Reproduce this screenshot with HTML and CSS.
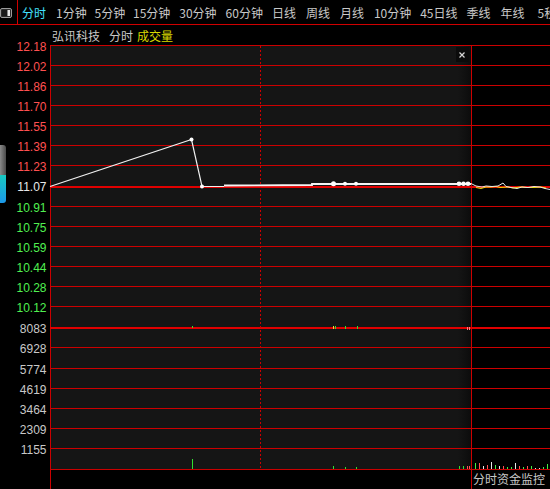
FILE: index.html
```html
<!DOCTYPE html>
<html lang="zh">
<head>
<meta charset="utf-8">
<title>弘讯科技 分时</title>
<link rel="stylesheet" href="styles.css">
</head>
<body>
<div class="app">
  <div class="topbar">
    <div class="menu-btn">
      <svg width="13" height="11" viewBox="0 0 13 11">
        <rect x="0.5" y="0.5" width="11" height="9" rx="1.5" fill="#2a2a2a" stroke="#9a9a9a"/>
        <rect x="2" y="2" width="5" height="6" fill="#1a1a1a"/>
        <rect x="7.5" y="2" width="2.5" height="6" fill="#e8e8e8"/>
      </svg>
    </div>
    <div class="tabs">
      <span class="tab w2 active">分时</span>
      <span class="tab w3">1分钟</span>
      <span class="tab w3">5分钟</span>
      <span class="tab w4">15分钟</span>
      <span class="tab w4">30分钟</span>
      <span class="tab w4">60分钟</span>
      <span class="tab w2">日线</span>
      <span class="tab w2">周线</span>
      <span class="tab w2">月线</span>
      <span class="tab w4">10分钟</span>
      <span class="tab w4">45日线</span>
      <span class="tab w2">季线</span>
      <span class="tab w2b">年线</span>
      <span class="tab w2">5秒</span>
    </div>
  </div>
  <div class="title">
    <span class="name">弘讯科技</span>
    <span class="period">分时</span>
    <span class="vol">成交量</span>
  </div>
  <svg class="chart" width="550" height="444" viewBox="0 45 550 444">
    <defs>
      <linearGradient id="thumbTop" x1="0" x2="1" y1="0" y2="0">
        <stop offset="0" stop-color="#8a8a8a"/>
        <stop offset="1" stop-color="#4a4a4a"/>
      </linearGradient>
      <linearGradient id="thumbBot" x1="0" x2="0" y1="0" y2="1">
        <stop offset="0" stop-color="#18c8c0"/>
        <stop offset="1" stop-color="#1c98e8"/>
      </linearGradient>
      <linearGradient id="edge" x1="0" x2="1" y1="0" y2="0">
        <stop offset="0" stop-color="#151515"/>
        <stop offset="1" stop-color="#0c0c0c"/>
      </linearGradient>
      <clipPath id="thumbClip"><rect x="-3" y="145" width="9" height="58" rx="3"/></clipPath>
    </defs>

    <!-- scroll thumb -->
    <g clip-path="url(#thumbClip)">
      <rect x="0" y="145" width="6" height="30" fill="url(#thumbTop)"/>
      <rect x="0" y="175" width="6" height="28" fill="url(#thumbBot)"/>
    </g>

    <!-- plot background -->
    <rect x="51" y="46" width="420" height="423" fill="#151515"/>
    <rect x="458" y="46" width="13" height="423" fill="url(#edge)"/>

    <!-- close button -->
    <rect x="456" y="47" width="13" height="15" fill="#0b0b0b"/>
    <path d="M459.5 52.5 L464.5 57.5 M464.5 52.5 L459.5 57.5" stroke="#d8d8d8" stroke-width="1.2"/>

    <!-- grid -->
    <g fill="#cc0000">
      <rect x="50" y="45" width="500" height="1"/>
      <rect x="50" y="65" width="500" height="1"/>
      <rect x="50" y="85" width="500" height="1"/>
      <rect x="50" y="105" width="500" height="1"/>
      <rect x="50" y="125" width="500" height="1"/>
      <rect x="50" y="145" width="500" height="1"/>
      <rect x="50" y="165" width="500" height="1"/>
      <rect x="50" y="206" width="500" height="1"/>
      <rect x="50" y="226" width="500" height="1"/>
      <rect x="50" y="246" width="500" height="1"/>
      <rect x="50" y="266" width="500" height="1"/>
      <rect x="50" y="286" width="500" height="1"/>
      <rect x="50" y="306" width="500" height="1"/>
      <rect x="50" y="347" width="500" height="1"/>
      <rect x="50" y="368" width="500" height="1"/>
      <rect x="50" y="388" width="500" height="1"/>
      <rect x="50" y="408" width="500" height="1"/>
      <rect x="50" y="428" width="500" height="1"/>
      <rect x="50" y="448" width="500" height="1"/>
      <rect x="50" y="469" width="500" height="1"/>
      <rect x="50" y="45" width="1" height="444"/>
      <rect x="471" y="45" width="1" height="444"/>
    </g>
    <g fill="#e00000">
      <rect x="50" y="186" width="500" height="2"/>
      <rect x="50" y="327" width="500" height="2"/>
    </g>
    <line x1="260.5" y1="46" x2="260.5" y2="469" stroke="#cc0000" stroke-width="1" stroke-dasharray="2 2"/>

    <!-- axis labels -->
    <g class="axis" text-anchor="end">
      <text x="46.5" y="50.5" class="up">12.18</text>
      <text x="46.5" y="70.5" class="up">12.02</text>
      <text x="46.5" y="90.5" class="up">11.86</text>
      <text x="46.5" y="110.5" class="up">11.70</text>
      <text x="46.5" y="130.5" class="up">11.55</text>
      <text x="46.5" y="150.5" class="up">11.39</text>
      <text x="46.5" y="170.5" class="up">11.23</text>
      <text x="46.5" y="191" class="flat">11.07</text>
      <text x="46.5" y="211.5" class="down">10.91</text>
      <text x="46.5" y="231.5" class="down">10.75</text>
      <text x="46.5" y="251.5" class="down">10.59</text>
      <text x="46.5" y="271.5" class="down">10.44</text>
      <text x="46.5" y="291.5" class="down">10.28</text>
      <text x="46.5" y="311.5" class="down">10.12</text>
      <text x="46.5" y="332.5" class="volt">8083</text>
      <text x="46.5" y="352.5" class="volt">6928</text>
      <text x="46.5" y="373.5" class="volt">5774</text>
      <text x="46.5" y="393.5" class="volt">4619</text>
      <text x="46.5" y="413.5" class="volt">3464</text>
      <text x="46.5" y="433.5" class="volt">2309</text>
      <text x="46.5" y="453.5" class="volt">1155</text>
    </g>

    <!-- price line -->
    <polyline points="50,186.5 191.5,139.5 202,186.5 224,186.5" fill="none" stroke="#f0f0f0" stroke-width="1.2"/>
    <polyline points="224,185.5 312,185 312,184 471,184" fill="none" stroke="#f4f4f4" stroke-width="1.8"/>
    <g fill="#ffffff">
      <circle cx="191.5" cy="139.5" r="2"/>
      <circle cx="202" cy="186.5" r="2"/>
      <circle cx="333.5" cy="183.8" r="2.5"/>
      <circle cx="345" cy="183.8" r="2"/>
      <circle cx="356" cy="183.8" r="2"/>
      <circle cx="459" cy="183.8" r="2.3"/>
      <circle cx="463.5" cy="183.8" r="2.3"/>
      <circle cx="468" cy="183.8" r="2.3"/>
    </g>
    <!-- next-day area -->
    <polyline points="476,187.5 481,188.5 486,187 491,187 496,186.5 500,187.5 508,187 513,188 520,187 527,187.5 534,187.5 541,187 546,188" fill="none" stroke="#e8e000" stroke-width="1"/>
    <polyline points="471,183.5 476,186 482,187 486,186 492,186.5 498,186 503,183 506,186.5 511,187.5 517,188.5 522,187 528,187.5 534,186.5 540,187 545,188.5 550,189.5" fill="none" stroke="#e8e8e8" stroke-width="1"/>

    <!-- volume ticks on divider -->
    <rect x="192" y="326" width="1" height="2" fill="#30e030"/>
    <rect x="333" y="326" width="1" height="3" fill="#e0e040"/>
    <rect x="335" y="326" width="1" height="3" fill="#30e030"/>
    <rect x="345" y="326" width="1" height="3" fill="#30e030"/>
    <rect x="357" y="326" width="1" height="3" fill="#30e030"/>
    <rect x="467" y="327" width="1" height="3" fill="#ff8080"/>
    <rect x="469" y="327" width="1" height="3" fill="#ff8080"/>

    <!-- volume bars -->
    <g>
      <rect x="192" y="459" width="1" height="10" fill="#30e030"/>
      <rect x="333" y="466" width="1" height="3" fill="#30e030"/>
      <rect x="345" y="467" width="1" height="2" fill="#30e030"/>
      <rect x="356" y="467" width="1" height="2" fill="#30e030"/>
      <rect x="459" y="466" width="1" height="3" fill="#30e030"/>
      <rect x="463" y="466" width="1" height="3" fill="#30e030"/>
      <rect x="467" y="466" width="1" height="3" fill="#ff5050"/>
      <rect x="469" y="466" width="1" height="3" fill="#ff5050"/>

      <rect x="475" y="463" width="1" height="6" fill="#40f040"/>
      <rect x="479" y="463" width="1" height="6" fill="#ff5050"/>
      <rect x="483" y="466" width="1" height="3" fill="#e8e8e8"/>
      <rect x="487" y="465" width="1" height="4" fill="#ff5050"/>
      <rect x="491" y="462" width="1" height="7" fill="#e8e8e8"/>
      <rect x="495" y="465" width="1" height="4" fill="#40f040"/>
      <rect x="499" y="466" width="1" height="3" fill="#e8e8e8"/>
      <rect x="503" y="466" width="1" height="3" fill="#ff5050"/>
      <rect x="507" y="467" width="1" height="2" fill="#40f040"/>
      <rect x="511" y="467" width="1" height="2" fill="#40f040"/>
      <rect x="515" y="463" width="1" height="6" fill="#e8e8e8"/>
      <rect x="519" y="466" width="1" height="3" fill="#ff5050"/>
      <rect x="523" y="467" width="1" height="2" fill="#40f040"/>
      <rect x="527" y="466" width="1" height="3" fill="#ff5050"/>
      <rect x="531" y="466" width="1" height="3" fill="#40f040"/>
      <rect x="535" y="468" width="1" height="1" fill="#e8e8e8"/>
      <rect x="539" y="468" width="1" height="1" fill="#e8e8e8"/>
      <rect x="543" y="467" width="1" height="2" fill="#40f040"/>
      <rect x="547" y="464" width="1" height="5" fill="#40f040"/>
    </g>

    <text x="473" y="484" class="monitor">分时资金监控</text>
  </svg>
</div>
</body>
</html>
```

FILE: styles.css
```css
html, body {
  margin: 0;
  padding: 0;
  background: #000;
}
body {
  width: 550px;
  height: 489px;
  overflow: hidden;
  font-family: "Noto Sans CJK SC", "Noto Sans", sans-serif;
  font-size: 12px;
  color: #c8c8c8;
}
.app {
  width: 550px;
  height: 489px;
  overflow: hidden;
}
.topbar {
  display: flex;
  height: 24px;
  border-bottom: 1px solid #d00000;
}
.menu-btn {
  width: 18px;
  flex: none;
  display: flex;
  align-items: center;
  padding-top: 2px;
  box-sizing: border-box;
  border-right: 1px solid #d00000;
}
.tabs {
  display: flex;
  align-items: center;
  padding-left: 4px;
  padding-top: 2px;
  white-space: nowrap;
  overflow: hidden;
}
.tab {
  flex: none;
  line-height: 16px;
}
.tab.active {
  color: #44e0ff;
}
.w2 { width: 34px; }
.w2b { width: 37px; }
.w3 { width: 38.5px; }
.w4 { width: 46.3px; }
.title {
  display: flex;
  height: 20px;
  align-items: center;
  padding-left: 52px;
  padding-top: 1px;
  box-sizing: border-box;
  white-space: nowrap;
}
.title .name { margin-right: 9px; }
.title .period { margin-right: 4px; }
.title .vol { color: #d8d800; }
.chart {
  display: block;
  overflow: visible;
  shape-rendering: crispEdges;
}
.chart polyline, .chart circle, .chart path {
  shape-rendering: geometricPrecision;
}
.axis text {
  font-family: "Liberation Sans", Arial, sans-serif;
  font-size: 12px;
}
.axis .up { fill: #ff5050; }
.axis .flat { fill: #e8e8e8; }
.axis .down { fill: #50f050; }
.axis .volt { fill: #c8c8c8; }
.monitor {
  font-family: "Noto Sans CJK SC", sans-serif;
  font-size: 12px;
  fill: #c8c8c8;
}
```
